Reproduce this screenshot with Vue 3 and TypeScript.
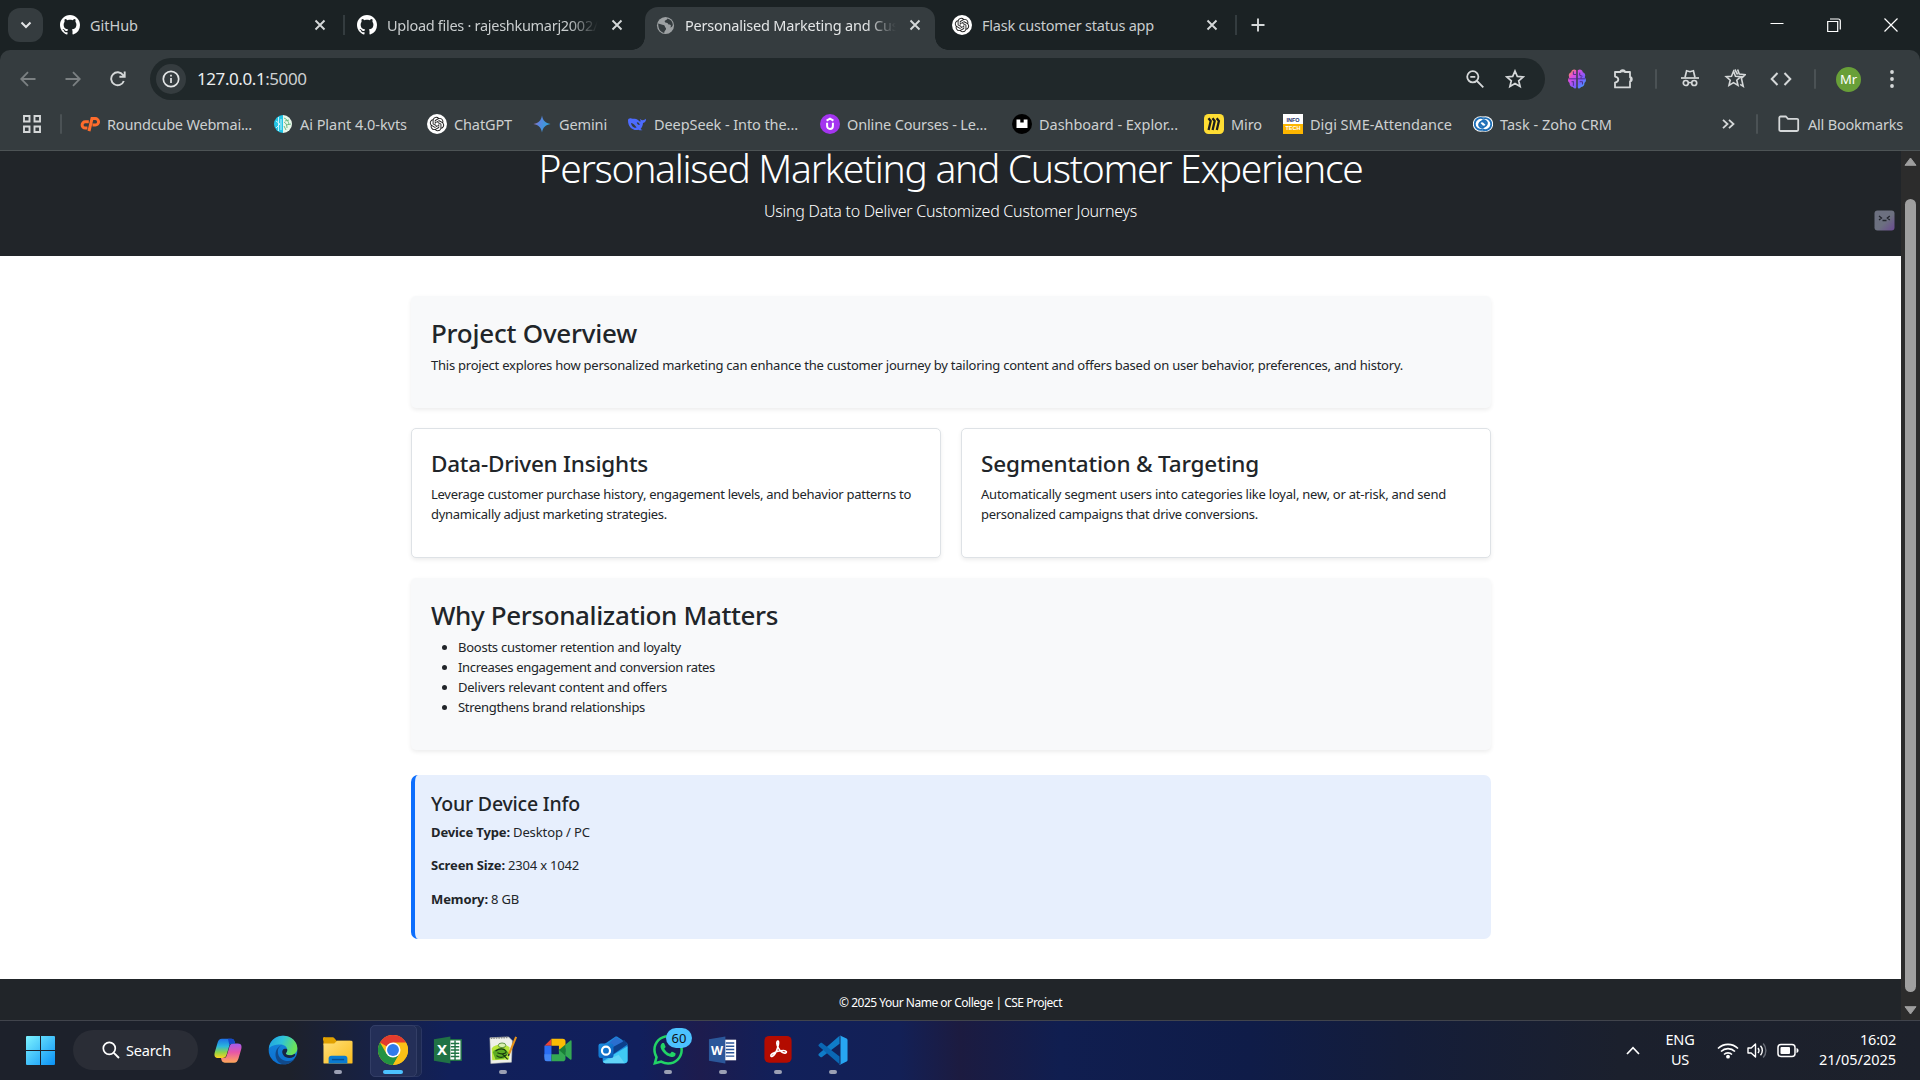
<script setup lang="ts">
import type { Directive } from 'vue'

// Spreads or tightens the tracking of a label so that it fills the given width.
const vTrack: Directive<HTMLElement, number> = {
  mounted(el, { value }) {
    const range = document.createRange()
    range.selectNodeContents(el)
    const count = (el.textContent ?? '').length
    const natural = range.getBoundingClientRect().width
    if (count > 1) el.style.letterSpacing = `${(value - natural) / count}px`
  },
}

interface Tab { icon: string; title: string; width: number; text: number; active?: boolean; divider?: boolean; faded?: boolean }
interface Bookmark { icon: string; label: string; width: number; text: number; stacked?: string[] }
interface TaskApp { icon: string; running?: boolean; active?: boolean; badge?: string; letter?: string }

const tabs: Tab[] = [
  { icon: 'github', title: 'GitHub', width: 297, text: 48, divider: true },
  { icon: 'github', title: 'Upload files · rajeshkumarj2002/', width: 300, text: 211, faded: true },
  { icon: 'globe', title: 'Personalised Marketing and Custo', width: 290, text: 227, active: true, faded: true },
  { icon: 'gpt', title: 'Flask customer status app', width: 302, text: 172, divider: true },
]

const bookmarks: Bookmark[] = [
  { icon: 'cpanel', label: 'Roundcube Webmai...', width: 193, text: 145 },
  { icon: 'plant', label: 'Ai Plant 4.0-kvts', width: 154, text: 107 },
  { icon: 'gpt', label: 'ChatGPT', width: 105, text: 58 },
  { icon: 'gemini', label: 'Gemini', width: 95, text: 48 },
  { icon: 'deepseek', label: 'DeepSeek - Into the...', width: 193, text: 144 },
  { icon: 'udemy', label: 'Online Courses - Le...', width: 192, text: 140 },
  { icon: 'dash', label: 'Dashboard - Explor...', width: 192, text: 139 },
  { icon: 'miro', label: 'Miro', width: 79, text: 31 },
  { icon: 'info', label: 'Digi SME-Attendance', width: 190, text: 142, stacked: ['INFO', 'TECH'] },
  { icon: 'zoho', label: 'Task - Zoho CRM', width: 160, text: 112 },
]

const features = [
  { title: 'Data-Driven Insights', width: 217, lines: [
    { text: 'Leverage customer purchase history, engagement levels, and behavior patterns to', width: 480 },
    { text: 'dynamically adjust marketing strategies.', width: 236 },
  ] },
  { title: 'Segmentation & Targeting', width: 278, lines: [
    { text: 'Automatically segment users into categories like loyal, new, or at-risk, and send', width: 465 },
    { text: 'personalized campaigns that drive conversions.', width: 277 },
  ] },
]

const reasons = [
  { text: 'Boosts customer retention and loyalty', width: 223 },
  { text: 'Increases engagement and conversion rates', width: 257 },
  { text: 'Delivers relevant content and offers', width: 209 },
  { text: 'Strengthens brand relationships', width: 187 },
]

const device = [
  { label: 'Device Type:', value: 'Desktop / PC', lw: 79, vw: 77 },
  { label: 'Screen Size:', value: '2304 x 1042', lw: 74, vw: 71 },
  { label: 'Memory:', value: '8 GB', lw: 57, vw: 28 },
]

const apps: TaskApp[] = [
  { icon: 'copilot' }, { icon: 'edge' }, { icon: 'folder', running: true },
  { icon: 'chrome', active: true }, { icon: 'excel', letter: 'X' }, { icon: 'notepad', running: true },
  { icon: 'meet' }, { icon: 'outlook' }, { icon: 'whatsapp', running: true, badge: '60' },
  { icon: 'word', running: true, letter: 'W' }, { icon: 'acrobat', running: true }, { icon: 'vscode', running: true },
]
</script>

<template>
  <div class="desktop">
    <svg class="sprite" width="0" height="0" aria-hidden="true">
      <defs>
        <linearGradient id="gWin" x1="0" y1="0" x2="1" y2="1"><stop offset="0" stop-color="#7df3ff" /><stop offset="1" stop-color="#0a91f5" /></linearGradient>
        <linearGradient id="gGem" x1="0" y1="0" x2="1" y2="0.3"><stop offset="0" stop-color="#c06a86" /><stop offset=".4" stop-color="#5b83e0" /><stop offset="1" stop-color="#2fa3d9" /></linearGradient>
        <linearGradient id="gBrain" x1="0" y1="0" x2="1" y2="1"><stop offset=".05" stop-color="#ff9a3d" /><stop offset=".3" stop-color="#e04be0" /><stop offset=".65" stop-color="#7a5cff" /><stop offset="1" stop-color="#2fb4ff" /></linearGradient>
        <linearGradient id="gPlant" x1="0" y1="0" x2="1" y2="0"><stop offset=".5" stop-color="#22c5e6" /><stop offset=".5" stop-color="#e8f6ea" /></linearGradient>
        <linearGradient id="gCopA" x1="0" y1="0" x2="0" y2="1"><stop offset="0" stop-color="#1c6fe8" /><stop offset=".4" stop-color="#2bb7dd" /><stop offset=".7" stop-color="#8bd34a" /><stop offset="1" stop-color="#ffd21f" /></linearGradient>
        <linearGradient id="gCopB" x1="0" y1="0" x2="0" y2="1"><stop offset="0" stop-color="#a15cf0" /><stop offset=".45" stop-color="#e755a8" /><stop offset="1" stop-color="#ffa75a" /></linearGradient>
        <linearGradient id="gEdgeA" x1="0" y1="0" x2="1" y2=".3"><stop offset="0" stop-color="#1f9fe0" /><stop offset=".5" stop-color="#2fc3d8" /><stop offset="1" stop-color="#6be35a" /></linearGradient>
        <linearGradient id="gEdgeB" x1="0" y1="0" x2="0" y2="1"><stop offset="0" stop-color="#1788dc" /><stop offset="1" stop-color="#0b6fd0" /></linearGradient>
        <linearGradient id="gFold" x1="0" y1="0" x2="1" y2="1"><stop offset="0" stop-color="#ffe07a" /><stop offset="1" stop-color="#fbbc1c" /></linearGradient>
        <linearGradient id="gOut" x1="0" y1="0" x2="1" y2="1"><stop offset="0" stop-color="#1a8fe3" /><stop offset="1" stop-color="#0a5ab8" /></linearGradient>
        <linearGradient id="gBot" x1="0" y1="0" x2="1" y2="1"><stop offset=".55" stop-color="#6c7080" /><stop offset="1" stop-color="#6b4a92" /></linearGradient>
      </defs>

      <symbol id="github" viewBox="0 0 16 16"><path fill="#fff" d="M8 0C3.58 0 0 3.58 0 8c0 3.54 2.29 6.53 5.47 7.59.4.07.55-.17.55-.38 0-.19-.01-.82-.01-1.49-2.01.37-2.53-.49-2.69-.94-.09-.23-.48-.94-.82-1.13-.28-.15-.68-.52-.01-.53.63-.01 1.08.58 1.23.82.72 1.21 1.87.87 2.33.66.07-.52.28-.87.51-1.07-1.78-.2-3.64-.89-3.64-3.95 0-.87.31-1.59.82-2.15-.08-.2-.36-1.02.08-2.12 0 0 .67-.21 2.2.82.64-.18 1.32-.27 2-.27.68 0 1.36.09 2 .27 1.53-1.04 2.2-.82 2.2-.82.44 1.1.16 1.92.08 2.12.51.56.82 1.27.82 2.15 0 3.07-1.87 3.75-3.65 3.95.29.25.54.73.54 1.48 0 1.07-.01 1.93-.01 2.2 0 .21.15.46.55.38A8.013 8.013 0 0016 8c0-4.42-3.58-8-8-8z" /></symbol>
      <symbol id="globe" viewBox="0 0 24 24"><circle cx="12" cy="12" r="10.8" fill="#9da1a3" /><path fill="#353c3f" d="M2.8 9.6 8 11.2c1.8.3 3.2.6 3.2 2.2 0 1.3 1.5 1.2 1.5 2.6 0 2-2.2 2.4-2.4 5.4C5.4 20.4 2.7 16.600 2.800 9.600zM14.500 3.200c-.3 1.600-1.900 1.800-3 2.600-1 .8-.4 2.400 1 2.700 1.800.3 2 .2 2.800 1.500.7 1.200 2.700.6 3.300 1.600.5 1 .2 2.200-1.300 2.600 2.400.5 3.200-.8 4-2.800C21.200 7.200 18.600 4.200 14.500 3.200z" /></symbol>
      <symbol id="gpt" viewBox="0 0 32 32"><circle cx="16" cy="16" r="16" fill="#fff" /><path transform="translate(4.500 4.500) scale(.96)" fill="#222" d="M22.2819 9.8211a5.9847 5.9847 0 0 0-.5157-4.9108 6.0462 6.0462 0 0 0-6.5098-2.9A6.0651 6.0651 0 0 0 4.9807 4.1818a5.9847 5.9847 0 0 0-3.9977 2.9 6.0462 6.0462 0 0 0 .7427 7.0966 5.98 5.98 0 0 0 .511 4.9107 6.051 6.051 0 0 0 6.5146 2.9001A5.9847 5.9847 0 0 0 13.2599 24a6.0557 6.0557 0 0 0 5.7718-4.2058 5.9894 5.9894 0 0 0 3.9977-2.9001 6.0557 6.0557 0 0 0-.7475-7.0729zm-9.022 12.6081a4.4755 4.4755 0 0 1-2.8764-1.0408l.1419-.0804 4.7783-2.7582a.7948.7948 0 0 0 .3927-.6813v-6.7369l2.02 1.1686a.071.071 0 0 1 .038.052v5.5826a4.504 4.504 0 0 1-4.4945 4.4944zm-9.6607-4.1254a4.4708 4.4708 0 0 1-.5346-3.0137l.142.0852 4.783 2.7582a.7712.7712 0 0 0 .7806 0l5.8428-3.3685v2.3324a.0804.0804 0 0 1-.0332.0615L9.74 19.9502a4.4992 4.4992 0 0 1-6.1408-1.6464zM2.3408 7.8956a4.485 4.485 0 0 1 2.3655-1.9728V11.6a.7664.7664 0 0 0 .3879.6765l5.8144 3.3543-2.0201 1.1685a.0757.0757 0 0 1-.071 0l-4.8303-2.7865A4.504 4.504 0 0 1 2.3408 7.872zm16.5963 3.8558L13.1038 8.364 15.1192 7.2a.0757.0757 0 0 1 .071 0l4.8303 2.7913a4.4944 4.4944 0 0 1-.6765 8.1042v-5.6772a.79.79 0 0 0-.407-.667zm2.0107-3.0231l-.142-.0852-4.7735-2.7818a.7759.7759 0 0 0-.7854 0L9.409 9.2297V6.8974a.0662.0662 0 0 1 .0284-.0615l4.8303-2.7866a4.4992 4.4992 0 0 1 6.6802 4.66zM8.3065 12.863l-2.02-1.1638a.0804.0804 0 0 1-.038-.0567V6.0742a4.4992 4.4992 0 0 1 7.3757-3.4537l-.142.0805L8.704 5.459a.7948.7948 0 0 0-.3927.6813zm1.0976-2.3654l2.602-1.4998 2.6069 1.4998v2.9994l-2.5974 1.4997-2.6067-1.4997Z" /></symbol>

      <symbol id="cpanel" viewBox="0 0 20 20"><g fill="none" stroke="#ff6c2c" stroke-width="3"><path d="M8.800 7.800H5.200a3.100 3.100 0 0 0 0 6.200H7.400" /><path d="M9 17.200 12 4.600h3.200a3.100 3.100 0 0 1 .2 6.500H12.500" /></g></symbol>
      <symbol id="plant" viewBox="0 0 20 20"><circle cx="10" cy="10" r="9" fill="url(#gPlant)" /><path d="M5.500 3v14M8 5v11M3 7l4 3-4 4" stroke="#d4f7ff" stroke-width=".9" fill="none" /><path d="M11 4c3 1 5 4 5 7M11 8c2 1 3 3 3 6M11 12l2 4M12 7l4-1M13 11l5-1" stroke="#63b67b" stroke-width=".9" fill="none" /></symbol>
      <symbol id="gemini" viewBox="0 0 20 20"><path fill="url(#gGem)" d="M10 1.500c.8 5 3.500 7.700 8.500 8.500-5 .8-7.700 3.500-8.500 8.500-.8-5-3.500-7.700-8.500-8.500 5-.8 7.700-3.500 8.500-8.500z" /></symbol>
      <symbol id="deepseek" viewBox="0 0 20 20"><path fill="#4d6bfe" d="M1 6.500C1 4.800 2.500 4 4.500 4.500c1.500.4 2.300.2 3.200.2 2 .1 4 1.400 5.300 3.100.9-.3.500-1.800-.2-3.100 1 .8 1.500 1.300 2.700 1.500C16.800 6.300 18 5.500 19 4.800c.3 2.200-.9 3.900-3 4.300-.1 2.500-1 4.500-2.400 5.800.8.5 1.400.8 2 1.100-1.600.6-3 .4-4.200-.2C6 17.200 1 13 1 6.500z" /><path fill="#353c3f" d="M4 9c2.500.2 4 2.300 5.700 4.600-2.400.8-5.500-1.500-5.700-4.600zM9.800 8.200c1.600-.2 2.900 1.200 2.900 2.700-1.400.2-2.900-1-2.900-2.700z" /></symbol>
      <symbol id="udemy" viewBox="0 0 20 20"><circle cx="10" cy="10" r="10" fill="#a435f0" /><path d="M7.100 8.800v3.200a2.900 2.900 0 0 0 5.800 0V8.800M6.600 6.700 10 4.700l3.400 2" fill="none" stroke="#fff" stroke-width="2" /></symbol>
      <symbol id="dash" viewBox="0 0 20 20"><circle cx="10" cy="10" r="10" fill="#000" /><path fill="#fff" d="M4.500 5.500h3.800v3h3.400V5.500h3.800v8.500h-11z" /></symbol>
      <symbol id="miro" viewBox="0 0 20 20"><rect width="20" height="20" rx="4.500" fill="#ffdd33" /><path d="M4.500 4.200 6.700 7 4.600 16M8.500 4.200 10.700 7 8.600 16M12.700 4.200 14.900 7 12.800 16" fill="none" stroke="#1c1c1e" stroke-width="2.300" /></symbol>
      <symbol id="info" viewBox="0 0 20 20"><path fill="#fff" d="M0 0h20v10H0z" /><path fill="#fdb600" d="M0 10h20v10H0z" /></symbol>
      <symbol id="zoho" viewBox="0 0 20 20"><circle cx="7.600" cy="10" r="7.800" fill="#fff" /><circle cx="12.400" cy="10" r="7.800" fill="#fff" /><g fill="none" stroke="#1f70b8" stroke-width="1.800"><path d="M10.600 4.600A6 6 0 1 0 9.600 15.600" /><path d="M9.400 15.400A6 6 0 1 0 10.400 4.400" /><path d="M11.500 12.500a3 3 0 1 1-.6-4.400l3.100 2.900M8.500 7.500a3 3 0 1 1 .6 4.400L6 9" /></g></symbol>

      <symbol id="copilot" viewBox="0 0 32 32"><path fill="url(#gCopA)" d="M9.500 4h10c2.200 0 3 1.200 3.500 3l.5 2h-3c-2 0-2.800 1.200-3.300 2.900L14.500 21c-.8 2.400-2 3.500-4.500 3.500H5.500C1.500 24.500 1 21.500 2 18L4.800 8.500C5.800 5.500 7 4 9.500 4z" /><path fill="url(#gCopB)" d="M22.500 29.500h-10c-2.200 0-3-1.200-3.500-3l-.5-2h3c2 0 2.800-1.200 3.300-2.900l2.700-9.100c.8-2.400 2-3.500 4.500-3.500h4.500c4 0 4.500 3 3.500 6.500l-2.800 9.500c-1 3-2.200 4.500-4.700 4.500z" /><path fill="#1548c9" d="M16 4h3.500c2.200 0 3 1.200 3.500 3l.5 2h-3c-1.500 0-2.500.8-3 2.200z" /></symbol>
      <symbol id="edge" viewBox="0 0 32 32"><circle cx="16" cy="16" r="15.300" fill="url(#gEdgeB)" /><path fill="url(#gEdgeA)" d="M1 14C2 6 8.500.700 16 .700c9 0 15.300 6.300 15.300 13.300 0 4.500-3.500 7.500-7.800 7.500-3.200 0-5-1.200-4.300-2.500 1-1.400 1.300-2.200 1.300-3.300 0-3-3-5.700-7.500-5.700C8 10 3 11.500 1 14z" /><path fill="#114a8b" d="M10.500 17.500c0 7 5.500 10.500 11.500 10.300 3-.100 5-1.300 6.500-2.700-2.500 4.300-7 6.300-11.500 6.200C11 30.500 8 25.500 8 21c0-5 3-9 7-10-3 1.200-4.500 3.500-4.500 6.500z" /><path fill="#182443" d="M20.500 15.500c.2 1.500-.3 2.500-1.300 3.700-.7 1.300.9 2.400 3.800 2.400 3 0 4.500-.9 5.500-1.700 1 .9.500 2.100-1 3.300-4 2.300-9 1.300-11-1.700-2.300-3-1.300-6.300 1.300-6.800 1.500-.3 2.500.2 2.700.8z" /></symbol>
      <symbol id="folder" viewBox="0 0 32 32"><path fill="#e1a100" d="M.500 6A2 2 0 0 1 2.500 2.500h7.500c1 0 1.500.3 2.200 1L14.500 6H29v5H.500z" /><path fill="url(#gFold)" d="M.500 9h11.500l3-3H30a1.500 1.500 0 0 1 1.500 1.500V29.500a1 1 0 0 1-1 1h-29a1 1 0 0 1-1-1z" /><path fill="#0a7bd0" d="M6 30.500V25a3 3 0 0 1 3-3h14a3 3 0 0 1 3 3v5.500z" /><path d="M9.500 26.200h13" stroke="#074f92" stroke-width="1.500" /></symbol>
      <symbol id="chrome" viewBox="0 0 48 48"><circle cx="24" cy="24" r="24" fill="#fbc116" /><path fill="#e33b2e" d="M24 24 3.200 12A24 24 0 0 1 44.800 12z" /><path fill="#e33b2e" d="M24 12h20.800L24 24z" /><path fill="#229342" d="M24 24v24A24 24 0 0 1 3.200 12l10.400 18z" /><path fill="#229342" d="m34.400 30-10.400 18-6-14z" /><path fill="#fbc116" d="M34.400 30 24 48a24 24 0 0 0 20.800-36H24z" /><circle cx="24" cy="24" r="12" fill="#fff" /><circle cx="24" cy="24" r="9.500" fill="#2f7bea" /></symbol>
      <symbol id="excel" viewBox="0 0 32 32"><path fill="#fff" d="M17 5h13v22H17z" /><path fill="none" stroke="#207245" stroke-width="1.500" d="M17 5h13v22H17M19 9h9M19 12.500h9M19 16h9M19 19.500h9M19 23h9M23.500 6v20" /><path fill="#207245" d="M18.500 1.500v29L1 27.500v-23z" /></symbol>
      <symbol id="word" viewBox="0 0 32 32"><path fill="#fff" d="M17 5h13v22H17z" /><path stroke="#2b579a" stroke-width="1.500" d="M19 8.500h9M19 12h9M19 15.500h9M19 19h9M19 22.500h9" /><path fill="#2b579a" d="M18.500 1.500v29L1 27.500v-23z" /></symbol>
      <symbol id="notepad" viewBox="0 0 32 32"><path fill="#eef0ea" stroke="#b8bcb4" stroke-width=".6" d="m2 3 20-1 4 4-1 23-22 1.500z" /><path stroke="#888" stroke-dasharray="1.500 1.200" stroke-width="1.800" d="M3 3.500 22 2.500" /><path fill="#b8e63c" d="M4 14c4-5 14-5 19-1l-.5 13-18 1z" /><path fill="#5cab22" d="M5 18c4-4 9-5 13-3l4 4-5 6-9 1z" /><path fill="none" stroke="#183a10" stroke-width="1.200" d="M8 17c4-3 9-3 11 0s-5 4-9 2M9 22c4 3 8 2 11-1M15 20l6 6" /><ellipse cx="15" cy="11" rx="4" ry="2.500" fill="#d9efb0" stroke="#3a7a1c" stroke-width=".8" /><path stroke="#e8941a" stroke-width="2.200" d="M30 2 22.500 20" /><path stroke="#333" stroke-width="1.600" d="m22.500 20-.8 2.500" /></symbol>
      <symbol id="meet" viewBox="0 0 32 32"><path fill="#ea4335" d="M1.500 11.500 9 4v7.500z" /><path fill="#fbbc04" d="M9 4h12a3 3 0 0 1 3 3v7l-7 4v-6.500H9z" /><path fill="#2a6df4" d="M1.500 11.500H9v9l-1 4.500H3.500a2 2 0 0 1-2-2z" /><path fill="#4285f4" d="M1.500 20.500H9V28H4a2.500 2.500 0 0 1-2.500-2.500z" /><path fill="#34a853" d="M9 20.500h8V15l7 3v7a3 3 0 0 1-3 3H9z" /><path fill="#188038" d="m17 16 7-6v12z" /><path fill="#34a853" d="m24 10 5-4c1-.8 1.500-.3 1.500.8v18.400c0 1.100-.7 1.500-1.500.8l-5-4z" /></symbol>
      <symbol id="outlook" viewBox="0 0 32 32"><path fill="#1c8de0" d="M5 11 18 2c1-.6 2-.6 3 0l9 6c1 .7 1.500 1.500 1.500 2.500V27c0 2-1 3-3 3H8c-2 0-3-1-3-3z" /><path fill="#0c3f8c" d="m10 13 18-8 3.500 5-16 11z" /><path fill="#2a6fd0" d="m9 11 10-9 8 5-15 8z" /><path fill="#3fc8f4" d="M31.500 12v15c0 2-1 3-3 3H8c-1.500 0-2.500-.7-2.900-2z" /><path fill="#7adcf8" d="M5.500 28.500 22 21l6.500 9H8c-1.200 0-2-.5-2.500-1.500z" opacity=".6" /><rect x=".5" y="9" width="16" height="15.500" rx="2.500" fill="url(#gOut)" /><circle cx="8.500" cy="16.700" r="4.300" fill="none" stroke="#fff" stroke-width="2.300" /></symbol>
      <symbol id="whatsapp" viewBox="0 0 24 24"><path fill="#22d366" d="M17.472 14.382c-.297-.149-1.758-.867-2.03-.967-.273-.099-.471-.148-.67.15-.197.297-.767.966-.94 1.164-.173.199-.347.223-.644.075-.297-.15-1.255-.463-2.39-1.475-.883-.788-1.48-1.761-1.653-2.059-.173-.297-.018-.458.13-.606.134-.133.298-.347.446-.52.149-.174.198-.298.298-.497.099-.198.05-.371-.025-.52-.075-.149-.669-1.612-.916-2.207-.242-.579-.487-.5-.669-.51-.173-.008-.371-.01-.57-.01-.198 0-.52.074-.792.372-.272.297-1.04 1.016-1.04 2.479 0 1.462 1.065 2.875 1.213 3.074.149.198 2.096 3.2 5.077 4.487.709.306 1.262.489 1.694.625.712.227 1.36.195 1.871.118.571-.085 1.758-.719 2.006-1.413.248-.694.248-1.289.173-1.413-.074-.124-.272-.198-.57-.347m-5.421 7.403h-.004a9.87 9.87 0 01-5.031-1.378l-.361-.214-3.741.982.998-3.648-.235-.374a9.86 9.86 0 01-1.51-5.26c.001-5.45 4.436-9.884 9.888-9.884 2.64 0 5.122 1.03 6.988 2.898a9.825 9.825 0 012.893 6.994c-.003 5.45-4.437 9.884-9.885 9.884m8.413-18.297A11.815 11.815 0 0012.05 0C5.495 0 .16 5.335.157 11.892c0 2.096.547 4.142 1.588 5.945L.057 24l6.305-1.654a11.882 11.882 0 005.683 1.448h.005c6.554 0 11.89-5.335 11.893-11.893a11.821 11.821 0 00-3.48-8.413Z" /></symbol>
      <symbol id="acrobat" viewBox="0 0 32 32"><rect x="1.500" y="1" width="29" height="28.500" rx="5" fill="#b30b00" /><path fill="none" stroke="#fff" stroke-width="1.700" stroke-linejoin="round" d="M16 6.500c-2 0-1.500 4 .5 7.500 2 3.600 5 5.500 7.200 5.300 2.200-.3 1.500-2.800-1.700-2.800-4.500 0-9 1.500-12.200 3.500-2.400 1.600-1.500 3.600.2 2.700 2-1.200 4.700-6 5.700-9.700 1-3 1.300-6.500.3-6.500z" /></symbol>
      <symbol id="vscode" viewBox="0 0 32 32"><path fill="#0f7cc8" d="M23 .800v8.400L4.300 23.500c-.6.500-1.200.4-1.700 0L.900 22c-.6-.5-.6-1.300 0-1.900z" /><path fill="#0a67b4" d="M23 31.200v-8.400L4.300 8.500c-.6-.5-1.200-.4-1.700 0L.900 10c-.6.5-.6 1.300 0 1.900z" /><path fill="#27a5f2" d="M22.200.600 23.500.400l7 3.300c.7.400 1 .9 1 1.700v21.200c0 .8-.3 1.300-1 1.700l-7 3.300-1.300-.2c.9.300 1.800-.2 1.800-1.200V1.800c0-1-.9-1.500-1.800-1.200z" /></symbol>
    </svg>

    <div class="tabstrip">
      <button class="tab-search">
        <svg width="12" height="8" viewBox="0 0 12 8"><path d="m1.500 1.500 4.500 4.500 4.500-4.500" fill="none" stroke="#e3e5e6" stroke-width="2" /></svg>
      </button>
      <div v-for="(tab, i) in tabs" :key="i" class="tab" :class="{ active: tab.active, divider: tab.divider, long: tab.faded }" :style="{ width: tab.width + 'px' }">
        <svg class="favicon" width="20" height="20"><use :href="'#' + tab.icon" /></svg>
        <span class="tab-title" :class="{ faded: tab.faded }"><span v-track="tab.text">{{ tab.title }}</span></span>
        <svg class="tab-close" width="12" height="12" viewBox="0 0 12 12"><path d="m1.500 1.500 9 9m0-9-9 9" stroke="#d5d8d9" stroke-width="1.900" /></svg>
      </div>
      <svg class="new-tab" width="14" height="14" viewBox="0 0 14 14"><path d="M7 .5v13M.5 7h13" stroke="#d5d8d9" stroke-width="1.900" /></svg>
      <div class="window-controls">
        <svg width="14" height="14" viewBox="0 0 14 14"><path d="M.5 5.500h13" stroke="#fff" /></svg>
        <svg width="14" height="14" viewBox="0 0 14 14"><path d="M.7 3.500h10v10H.7zM3 1h8.300A2 2 0 0 1 13.300 3v8.500" fill="none" stroke="#fff" stroke-width="1.200" /></svg>
        <svg width="14" height="14" viewBox="0 0 14 14"><path d="m.5.500 13 13m0-13-13 13" stroke="#fff" stroke-width="1.200" /></svg>
      </div>
    </div>

    <div class="chrome-panel">
      <div class="toolbar">
        <svg class="nav" width="16" height="16" viewBox="0 0 16 16"><path d="M15.500 8H1.500M8 1.200 1.200 8 8 14.800" fill="none" stroke="#7b8082" stroke-width="1.800" /></svg>
        <svg class="nav" width="16" height="16" viewBox="0 0 16 16"><path d="M.5 8h14M8 1.200 14.800 8 8 14.800" fill="none" stroke="#7b8082" stroke-width="1.800" /></svg>
        <svg class="nav" width="16" height="16" viewBox="0 0 16 16"><path d="M13.800 10A6.500 6.500 0 1 1 13 4l1.200 1.500M14.700.5v5.300H9.400" fill="none" stroke="#d5d8d9" stroke-width="1.900" /></svg>
        <div class="omnibox">
          <span class="site-info">
            <svg width="18" height="18" viewBox="0 0 18 18"><circle cx="9" cy="9" r="7.700" fill="none" stroke="#e3e5e6" stroke-width="1.700" /><path d="M9 8v5M9 4.800v1.700" stroke="#e3e5e6" stroke-width="1.700" /></svg>
          </span>
          <span class="url"><span v-track="109.5">127.0.0.1<i>:5000</i></span></span>
          <svg class="zoom-icon" width="18" height="18" viewBox="0 0 18 18"><circle cx="6.800" cy="6.800" r="5.600" fill="none" stroke="#d5d8d9" stroke-width="1.800" /><path d="m11 11 6.300 6.300M4.300 6.800h5" stroke="#d5d8d9" stroke-width="1.800" /></svg>
          <svg width="20" height="20" viewBox="0 0 20 20"><path d="m10 2 2.300 5.400 5.900.5-4.500 3.900 1.400 5.700L10 14.400l-5.100 3.100 1.400-5.700L1.800 7.900l5.900-.5z" fill="none" stroke="#d5d8d9" stroke-width="1.700" /></svg>
        </div>
        <div class="actions">
          <svg class="brain" width="20" height="20" viewBox="0 0 20 22"><path fill="url(#gBrain)" d="M9.200 1.500C7-.5 4 .800 3.600 3.500 1 4.200.3 7 1.500 9-.5 11-.2 14 1.800 15.300 1.600 18.500 4 20 5.700 19.800 6.500 22 9 21.800 9.200 20zM10.800 1.500C13-.5 16 .800 16.400 3.500 19 4.200 19.700 7 18.500 9c2 2 1.700 5-.3 6.300.2 3.200-2.200 4.700-3.900 4.500-.8 2.200-3.300 2-3.500.2z" /><path d="M1 10.800h18M6 2.500v3.500h3M6 13.500v5M13 4v3l3 1M13 14h3v3M4 14h2M14.500 10.500v-2" fill="none" stroke="#4a2a86" stroke-width="1" /></svg>
          <svg class="puzzle" width="22" height="22" viewBox="0 0 22 22"><path d="M2 5h5.500a2.200 1.800 0 0 1 4.400 0H17v5.200a1.800 2.100 0 0 1 0 4.200v6H2v-4.800c2.300-.4 3.300-1.500 3.300-3S4.300 10 2 9.600z" fill="none" stroke="#d5d8d9" stroke-width="1.800" stroke-linejoin="round" /><path d="M8 4.800a2 2 0 0 1 3.600 0zM17.300 10.500a2 2 0 0 1 0 3.600z" fill="#d5d8d9" stroke="#d5d8d9" /></svg>
          <i class="bar puzzle-bar" />
          <svg class="incog" width="20" height="20" viewBox="0 0 20 20"><path d="M1 10h18" stroke="#d5d8d9" stroke-width="1.700" /><path d="M5 9.500 6.600 2.700 10 3.700l3.400-1L15 9.500" fill="none" stroke="#d5d8d9" stroke-width="1.700" /><circle cx="5.800" cy="15" r="2.500" fill="none" stroke="#d5d8d9" stroke-width="1.700" /><circle cx="14.200" cy="15" r="2.500" fill="none" stroke="#d5d8d9" stroke-width="1.700" /><path d="M8 14.600h4" stroke="#d5d8d9" stroke-width="1.500" /></svg>
          <svg class="stars" width="22" height="22" viewBox="0 0 22 22"><path d="m9.500 3.300 2 5 5.300.4-4 3.500 1.200 5.200-4.500-2.800L5 17.400l1.200-5.200-4-3.500 5.300-.4zM10.800 1.500 13.600 6.500M13.600 1.500l1.700 4.600 5.900.6-3.800 3.600 1.800 8-3-2" fill="none" stroke="#d5d8d9" stroke-width="1.600" /></svg>
          <svg class="code" width="22" height="14" viewBox="0 0 22 14"><path d="M7.500 1 1.700 7l5.800 6M14.500 1l5.800 6-5.800 6" fill="none" stroke="#d5d8d9" stroke-width="2" /></svg>
          <i class="bar" />
          <span class="avatar">Mr</span>
          <svg class="menu" width="6" height="20" viewBox="0 0 6 20"><g fill="#d5d8d9"><circle cx="3" cy="3" r="1.900" /><circle cx="3" cy="10" r="1.900" /><circle cx="3" cy="17" r="1.900" /></g></svg>
        </div>
      </div>

      <div class="bookmarks">
        <svg class="apps-icon" width="18" height="18" viewBox="0 0 18 18"><path d="M1 1h5.500v5.500H1zM11.500 1H17v5.500h-5.500zM1 11.500h5.500V17H1zM11.500 11.500H17V17h-5.500z" fill="none" stroke="#d5d8d9" stroke-width="1.900" /></svg>
        <i class="bar" />
        <div class="bookmark-list">
          <div v-for="b in bookmarks" :key="b.label" class="bookmark" :style="{ width: b.width + 'px' }">
            <svg width="20" height="20"><use :href="'#' + b.icon" /><text v-for="(word, n) in b.stacked" :key="word" class="stacked" x="10" :y="8 + n * 8">{{ word }}</text></svg>
            <span v-track="b.text">{{ b.label }}</span>
          </div>
        </div>
        <svg class="more" width="13" height="10" viewBox="0 0 13 10"><path d="m1 .8 4.500 4.200L1 9.200M7 .8 11.500 5 7 9.200" fill="none" stroke="#d5d8d9" stroke-width="1.800" /></svg>
        <i class="bar" />
        <svg class="dir" width="22" height="18" viewBox="0 0 22 18"><path d="M2.500 1.500h5.300l2.200 2.300h9a1.200 1.200 0 0 1 1.200 1.200v9.800a1.200 1.200 0 0 1-1.200 1.200H2.500A1.200 1.200 0 0 1 1.300 14.800V2.700a1.200 1.200 0 0 1 1.200-1.200z" fill="none" stroke="#d5d8d9" stroke-width="1.800" /></svg>
        <span v-track="95">All Bookmarks</span>
      </div>
    </div>

    <div class="viewport">
      <div class="page">
        <header class="hero">
          <h1><span v-track="824">Personalised Marketing and Customer Experience</span></h1>
          <p><span v-track="373">Using Data to Deliver Customized Customer Journeys</span></p>
        </header>

        <main class="container">
          <section class="panel">
            <h2><span v-track="206">Project Overview</span></h2>
            <p><span v-track="972">This project explores how personalized marketing can enhance the customer journey by tailoring content and offers based on user behavior, preferences, and history.</span></p>
          </section>

          <div class="row">
            <section v-for="f in features" :key="f.title" class="card">
              <h3><span v-track="f.width">{{ f.title }}</span></h3>
              <p v-for="line in f.lines" :key="line.text"><span v-track="line.width">{{ line.text }}</span></p>
            </section>
          </div>

          <section class="panel why">
            <h2><span v-track="347">Why Personalization Matters</span></h2>
            <ul>
              <li v-for="r in reasons" :key="r.text"><span v-track="r.width">{{ r.text }}</span></li>
            </ul>
          </section>

          <section class="device">
            <h4><span v-track="149">Your Device Info</span></h4>
            <p v-for="d in device" :key="d.label"><strong v-track="d.lw">{{ d.label }}</strong><span v-track="d.vw">{{ d.value }}</span></p>
          </section>
        </main>

        <footer class="foot"><span v-track="223">© 2025 Your Name or College | CSE Project</span></footer>
      </div>

      <div class="scrollbar">
        <svg width="13" height="9" viewBox="0 0 13 9"><path d="M6.500 1 12 8.300H1z" fill="#9f9f9f" stroke="#9f9f9f" stroke-linejoin="round" /></svg>
        <div class="thumb" />
        <svg width="13" height="9" viewBox="0 0 13 9"><path d="M6.500 8 12 .7H1z" fill="#9f9f9f" stroke="#9f9f9f" stroke-linejoin="round" /></svg>
      </div>
      <svg class="bot" width="21" height="21" viewBox="0 0 21 21"><rect x=".5" y=".5" width="20" height="20" rx="3" fill="url(#gBot)" /><path d="m5 6 2.500 2L5 10M15.800 6l-2.500 2 2.500 2M8.500 10.500h4" fill="none" stroke="#22252c" stroke-width="1.300" /></svg>
    </div>

    <div class="taskbar">
      <svg class="start" width="29" height="29" viewBox="0 0 29 29"><path fill="url(#gWin)" d="M1 0h13v14H0V1a1 1 0 0 1 1-1zM15 0h13a1 1 0 0 1 1 1v13H15zM0 15h14v14H1a1 1 0 0 1-1-1zM15 15h14v13a1 1 0 0 1-1 1H15z" /></svg>
      <div class="search">
        <svg width="18" height="18" viewBox="0 0 18 18"><circle cx="7.300" cy="7.300" r="6" fill="none" stroke="#fff" stroke-width="1.700" /><path d="m11.800 11.800 5.200 5.200" stroke="#fff" stroke-width="1.900" /></svg>
        <span v-track="45">Search</span>
      </div>
      <div class="apps">
        <div v-for="a in apps" :key="a.icon" class="app" :class="{ current: a.active }">
          <svg width="30" height="30"><use :href="'#' + a.icon" /><text v-if="a.letter" class="letter" :class="a.icon" x="9" y="20">{{ a.letter }}</text></svg>
          <b v-if="a.badge" class="badge">{{ a.badge }}</b>
          <i v-if="a.running || a.active" class="mark" :class="{ wide: a.active }" />
        </div>
      </div>
      <div class="tray">
        <svg class="chev" width="14" height="9" viewBox="0 0 14 9"><path d="m1 8 6-6.300L13 8" fill="none" stroke="#fff" stroke-width="1.700" /></svg>
        <div class="lang"><span v-track="29">ENG</span><span v-track="18">US</span></div>
        <svg class="wifi" width="22" height="17" viewBox="0 0 22 17"><g fill="none" stroke="#fff" stroke-width="1.600"><path d="M1 6.500a14.200 14.200 0 0 1 20 0" /><path d="M4 9.500a10 10 0 0 1 14 0" /><path d="M7 12.500a5.800 5.800 0 0 1 8 0" /></g><circle cx="11" cy="14.700" r="1.900" fill="#fff" /></svg>
        <svg class="vol" width="22" height="17" viewBox="0 0 22 17"><g fill="none" stroke="#fff" stroke-width="1.400" stroke-linejoin="round"><path d="M1 6v5h3.200L8.500 15V2L4.200 6z" /><path d="M11 6a4 4 0 0 1 0 5M13.500 3.800a7 7 0 0 1 0 9.400" /><path d="M16.200 1.500a10.500 10.500 0 0 1 0 14" stroke="#6a6e78" /></g></svg>
        <svg class="bat" width="22" height="15" viewBox="0 0 22 15"><rect x="1" y="1.500" width="17" height="12" rx="3" fill="none" stroke="#fff" stroke-width="1.500" /><rect x="3.500" y="4" width="9.500" height="7" rx="1" fill="#fff" /><path d="M19.500 5v5c1.500-.5 2-1.300 2-2.500s-.5-2-2-2.500z" fill="#fff" /></svg>
        <div class="clock"><span v-track="36">16:02</span><span v-track="77">21/05/2025</span></div>
      </div>
    </div>
  </div>
</template>

<style>
body { margin: 0; overflow: hidden; }
</style>

<style scoped>
* { box-sizing: border-box; }
.desktop { width: 1920px; height: 1080px; display: flex; flex-direction: column; overflow: hidden; background: #1b2224; font-family: "Noto Sans", "Open Sans", sans-serif; color: #212529; }
.desktop svg { display: block; flex: none; }
.sprite { position: absolute; }
h1, h2, h3, h4, p, ul { margin: 0; padding: 0; }
span { white-space: nowrap; }
.bar { flex: none; width: 2px; height: 20px; border-radius: 1px; background: #4b5255; }

.tabstrip { height: 50px; flex: none; display: flex; align-items: stretch; background: #1b2224; color: #c9cdce; font-size: 14.500px; }
.tab-search { flex: none; width: 35px; height: 34px; margin: 8px 5px 0 8px; padding: 0; border: 0; border-radius: 12px; background: #353c3f; display: flex; align-items: center; justify-content: center; }
.tab { flex: none; position: relative; display: flex; align-items: center; padding: 0 19px 0 12px; }
.tab.long { padding-right: 22px; }
.tab.active + .tab { padding-left: 17px; }
.tab.divider::after { content: ""; position: absolute; right: 0; top: 15px; width: 2px; height: 20px; background: #343c3f; }
.tab .favicon { margin-right: 10px; }
.tab-title { flex: 1; overflow: hidden; line-height: 24px; }
.tab-title.faded { -webkit-mask-image: linear-gradient(90deg, #000 86%, transparent); mask-image: linear-gradient(90deg, #000 86%, transparent); }
.tab-close { margin-left: 13px; }
.tab.active { margin-top: 7px; padding: 0 14px 7px 11px; border-radius: 13px 13px 0 0; background: #353c3f; color: #e3e5e6; }
.tab.active .favicon { width: 19px; height: 19px; }
.tab.active::before, .tab.active::after { content: ""; position: absolute; bottom: 0; width: 13px; height: 13px; }
.tab.active::before { left: -13px; background: radial-gradient(circle at 0 0, transparent 12.500px, #353c3f 13px); }
.tab.active::after { right: -13px; background: radial-gradient(circle at 100% 0, transparent 12.500px, #353c3f 13px); }
.new-tab { margin: 18px 0 0 14px; }
.window-controls { margin: 18px 22px 0 auto; display: flex; gap: 43px; }

.chrome-panel { height: 101px; flex: none; background: #353c3f; border-bottom: 1px solid #4d5355; border-radius: 10px 10px 0 0; color: #cdd0d1; }
.toolbar { height: 58px; display: flex; align-items: center; padding: 0 25px 0 20px; }
.nav { margin-right: 29px; }
.omnibox { width: 1395px; height: 42px; margin-left: -5px; padding: 0 20px 0 6px; border-radius: 21px; background: #20282a; display: flex; align-items: center; }
.site-info { width: 30px; height: 30px; border-radius: 50%; background: #353c3f; display: flex; align-items: center; justify-content: center; }
.url { margin-left: 11px; flex: 1; color: #eceeef; font-size: 17px; line-height: 28px; }
.url i { font-style: normal; color: #cdd0d1; }
.zoom-icon { margin-right: 21px; }
.actions { flex: 1; display: flex; align-items: center; }
.brain { margin-left: 22px; }
.puzzle { margin: -2px 0 0 26px; }
.puzzle-bar { margin-left: 20px; }
.incog { margin: -2px 0 0 23px; }
.stars { margin-left: 24px; }
.code { margin: 0 22px 0 24px; }
.avatar { width: 25px; height: 25px; margin-left: 20px; border-radius: 50%; background: #689f38; color: #fff; font-size: 13px; line-height: 24px; text-align: center; }
.menu { margin-left: auto; }
.bookmarks { height: 32px; display: flex; align-items: center; padding-left: 23px; font-size: 14.500px; }
.apps-icon { margin-right: 19px; }
.bookmark-list { display: flex; margin-left: 18px; flex: 1; }
.bookmark { display: flex; align-items: center; gap: 7px; line-height: 24px; }
.stacked { font: 700 5.500px "Liberation Sans", sans-serif; text-anchor: middle; fill: #1c2f66; }
.stacked + .stacked { fill: #fff; }
.more { margin-right: 21px; }
.dir { margin: 0 8px 0 20px; }
.bookmarks > span { width: 112px; line-height: 24px; }

.viewport { position: relative; height: 869px; flex: none; display: flex; overflow: hidden; background: #fff; }
.page { width: 1901px; display: flex; flex-direction: column; font-size: 13px; line-height: 20px; }
.hero { height: 105px; flex: none; background: #212529; color: #fff; text-align: center; }
.hero h1 { margin-top: -7px; font-size: 39px; font-weight: 300; line-height: 48px; }
.hero p { margin-top: 6px; font-size: 16px; font-weight: 300; line-height: 26px; }
.container { width: 1080px; margin: 40px 410px 0 411px; flex: 1; }
.panel { height: 112px; padding: 21px 20px; border-radius: 5px; background: #f8f9fa; box-shadow: 0 2px 4px rgba(0, 0, 0, .075); }
.panel h2 { font-size: 26px; font-weight: 500; line-height: 32px; margin-bottom: 6px; }
.row { display: flex; gap: 20px; margin: 20px 0; }
.card { flex: 1; height: 130px; padding: 21px 19px; border: 1px solid #dee2e6; border-radius: 5px; background: #fff; box-shadow: 0 2px 4px rgba(0, 0, 0, .075); }
.card h3 { font-size: 22.500px; font-weight: 500; line-height: 28px; margin-bottom: 6px; }
.panel.why { height: 172px; }
.why ul { padding-left: 27px; }
.device { height: 164px; margin-top: 25px; padding: 17px 16px; border-left: 4px solid #0d6efd; border-radius: 7px; background: #e7effd; }
.device h4 { font-size: 19.500px; font-weight: 500; line-height: 24px; margin-bottom: 6px; }
.device p { margin-bottom: 13.300px; }
.device strong { display: inline-block; margin-right: 3px; white-space: nowrap; }
.foot { height: 41px; flex: none; background: #212529; color: #fff; text-align: center; font-size: 12px; line-height: 48px; }
.scrollbar { width: 19px; padding: 6px 0 5px; background: #2c2c2c; display: flex; flex-direction: column; align-items: center; }
.thumb { width: 11px; height: 793px; margin: 33px 0 auto; border-radius: 6px; background: #9f9f9f; }
.bot { position: absolute; left: 1874px; top: 59px; }

.taskbar { height: 60px; flex: none; display: flex; align-items: center; box-shadow: inset 0 1px #41444c; padding: 0 24px 0 26px; color: #fff; background: linear-gradient(90deg, #1d212b 0, #1d212b 290px, #172144 370px, #11205a 450px, #111f5c 640px, #1d1c4e 700px, #11205a 780px, #132056 900px, #1c1b40 960px, #101e50 1060px, #0f1c48 1250px, #141d3a 1400px, #1b202d 1620px, #1d212b 1920px); }
.search { width: 125px; height: 40px; margin-left: 18px; border-radius: 20px; background: #2a2d36; display: flex; align-items: center; padding-left: 29px; gap: 6px; font-size: 14.500px; line-height: 20px; }
.apps { display: flex; margin-left: 2px; }
.app { position: relative; width: 55px; height: 50px; display: flex; align-items: center; justify-content: center; }
.app.current::before { content: ""; position: absolute; left: 5px; top: 0; width: 50px; height: 50px; border: 1px solid #2a3662; border-radius: 5px; background: #1d2950; }
.app.current::after { content: ""; position: absolute; left: 5px; top: 0; width: 45px; height: 50px; border: 1px solid #333e66; border-radius: 5px; background: #242f58; }
.app svg { position: relative; z-index: 1; }
.letter { font-size: 15px; font-weight: 700; text-anchor: middle; fill: #fff; }
.letter.word { font-size: 12.500px; }
.mark { position: absolute; z-index: 1; bottom: 1px; left: 23.500px; width: 8px; height: 4px; border-radius: 2px; background: #9ba0b4; }
.mark.wide { left: 17.500px; width: 20px; background: #4cc2ff; }
.badge { position: absolute; z-index: 2; left: 26px; top: 3px; width: 26px; height: 20px; border-radius: 10px; background: #4cc2ff; color: #101418; font-size: 13px; font-weight: 400; line-height: 20px; text-align: center; }
.tray { margin-left: auto; display: flex; align-items: center; font-size: 14.500px; line-height: 20px; }
.lang { width: 44px; margin: -2px 15px 0 18px; display: flex; flex-direction: column; align-items: center; }
.wifi { margin-right: 8px; }
.vol { margin-right: 8px; }
.clock { margin: -3px 0 0 20px; display: flex; flex-direction: column; align-items: flex-end; }
</style>
